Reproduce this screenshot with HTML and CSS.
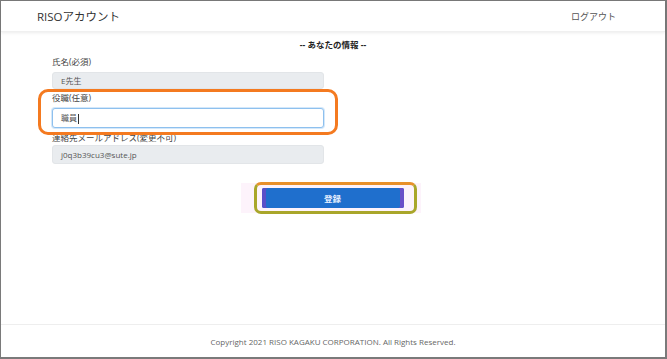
FILE: index.html
```html
<!DOCTYPE html>
<html lang="ja">
<head>
<meta charset="utf-8">
<link rel="stylesheet" href="styles.css">
</head>
<body>
<div class="frame">
  <header class="topbar">
    <span class="brand">RISOアカウント</span>
    <span class="logout">ログアウト</span>
  </header>
  <main class="main">
    <h2 class="heading">-- あなたの情報 --</h2>
    <form class="form">
      <label class="label first">氏名(必須)</label>
      <div class="input readonly">E先生</div>
      <label class="label">役職(任意)</label>
      <div class="input active">職員<span class="caret"></span></div>
      <label class="label email">連絡先メールアドレス(変更不可)</label>
      <div class="input readonly last">j0q3b39cu3@sute.jp</div>
      <div class="mark-orange"></div>
    </form>
    <div class="btnrow">
      <div class="glow"></div>
      <button class="submit" type="button">登録</button>
      <div class="mark-olive"></div>
    </div>
  </main>
  <footer class="footer">Copyright 2021 RISO KAGAKU CORPORATION. All Rights Reserved.</footer>
</div>
</body>
</html>
```

FILE: styles.css
```css
* { box-sizing: border-box; }
html, body { margin: 0; padding: 0; }
body {
  width: 667px;
  height: 359px;
  font-family: "Open Sans", "Noto Sans CJK JP", sans-serif;
  color: #333;
  background: #fff;
  overflow: hidden;
}
.frame {
  width: 667px;
  height: 359px;
  border: 1px solid #7a7a7a;
  border-right-width: 2px;
  border-bottom-width: 2px;
  display: flex;
  flex-direction: column;
}
.topbar {
  height: 31px;
  flex: none;
  display: flex;
  align-items: center;
  justify-content: space-between;
  padding: 0 49px 0 36px;
  box-shadow: 0 1px 3px rgba(0,0,0,0.08);
  border-bottom: 1px solid #f0f0f0;
}
.brand { font-size: 11.5px; color: #333; }
.logout { font-size: 9px; color: #555; }
.main {
  flex: 1;
  display: flex;
  flex-direction: column;
}
.heading {
  margin: 7px 0 0;
  text-align: center;
  font-size: 8.5px;
  font-weight: bold;
  color: #222;
  line-height: 12px;
}
.form {
  position: relative;
  display: flex;
  flex-direction: column;
  margin-left: 51px;
  width: 272px;
}
.label {
  font-size: 8.5px;
  line-height: 10px;
  color: #444;
  margin-top: 4px;
}
.label.first { margin-top: 6px; }
.label.email { margin-top: 5px; }
.input {
  height: 17px;
  border-radius: 3px;
  font-size: 8px;
  padding: 0 8px;
  color: #555;
  margin-top: 5px;
}
.readonly { background: #e9ecef; border: 1px solid #e2e5e8; line-height: 15px; }
.readonly.last { margin-top: 2px; height: 19px; line-height: 17px; }
.active {
  background: #fff;
  border: 1px solid #8ec0ee;
  box-shadow: 0 0 0 1px #d4e8fa;
  height: 20px;
  line-height: 18px;
}
.caret {
  display: inline-block;
  width: 1px;
  height: 10px;
  background: #333;
  vertical-align: middle;
  margin-left: 1px;
}
.mark-orange {
  position: absolute;
  left: -14px;
  top: 38px;
  width: 300px;
  height: 46px;
  border: 3px solid #f47a20;
  border-radius: 10px;
}
.btnrow {
  position: relative;
  display: flex;
  justify-content: center;
  margin-top: 24px;
}
.submit {
  width: 142px;
  height: 20px;
  border: none;
  border-radius: 2px;
  background: #1f6fcd;
  box-shadow: inset 4px 0 0 #5a4fc8, inset -4px 0 0 #6a4fc8;
  color: #e8f0ff;
  font-family: "Open Sans", "Noto Sans CJK JP", sans-serif;
  font-size: 8.5px;
  font-weight: bold;
  margin-left: -1px;
}
.glow {
  position: absolute;
  left: 240px;
  top: -5px;
  width: 180px;
  height: 30px;
  background: #fdf3fb;
  z-index: -1;
}
.mark-olive {
  position: absolute;
  left: 253px;
  top: -6px;
  width: 163px;
  height: 32px;
  border: 3px solid #a9a62a;
  border-top-color: #e8902a;
  border-radius: 7px;
}
.footer {
  flex: none;
  height: 33px;
  border-top: 1px solid #eee;
  display: flex;
  align-items: center;
  justify-content: center;
  font-size: 8px;
  color: #666;
}
```
